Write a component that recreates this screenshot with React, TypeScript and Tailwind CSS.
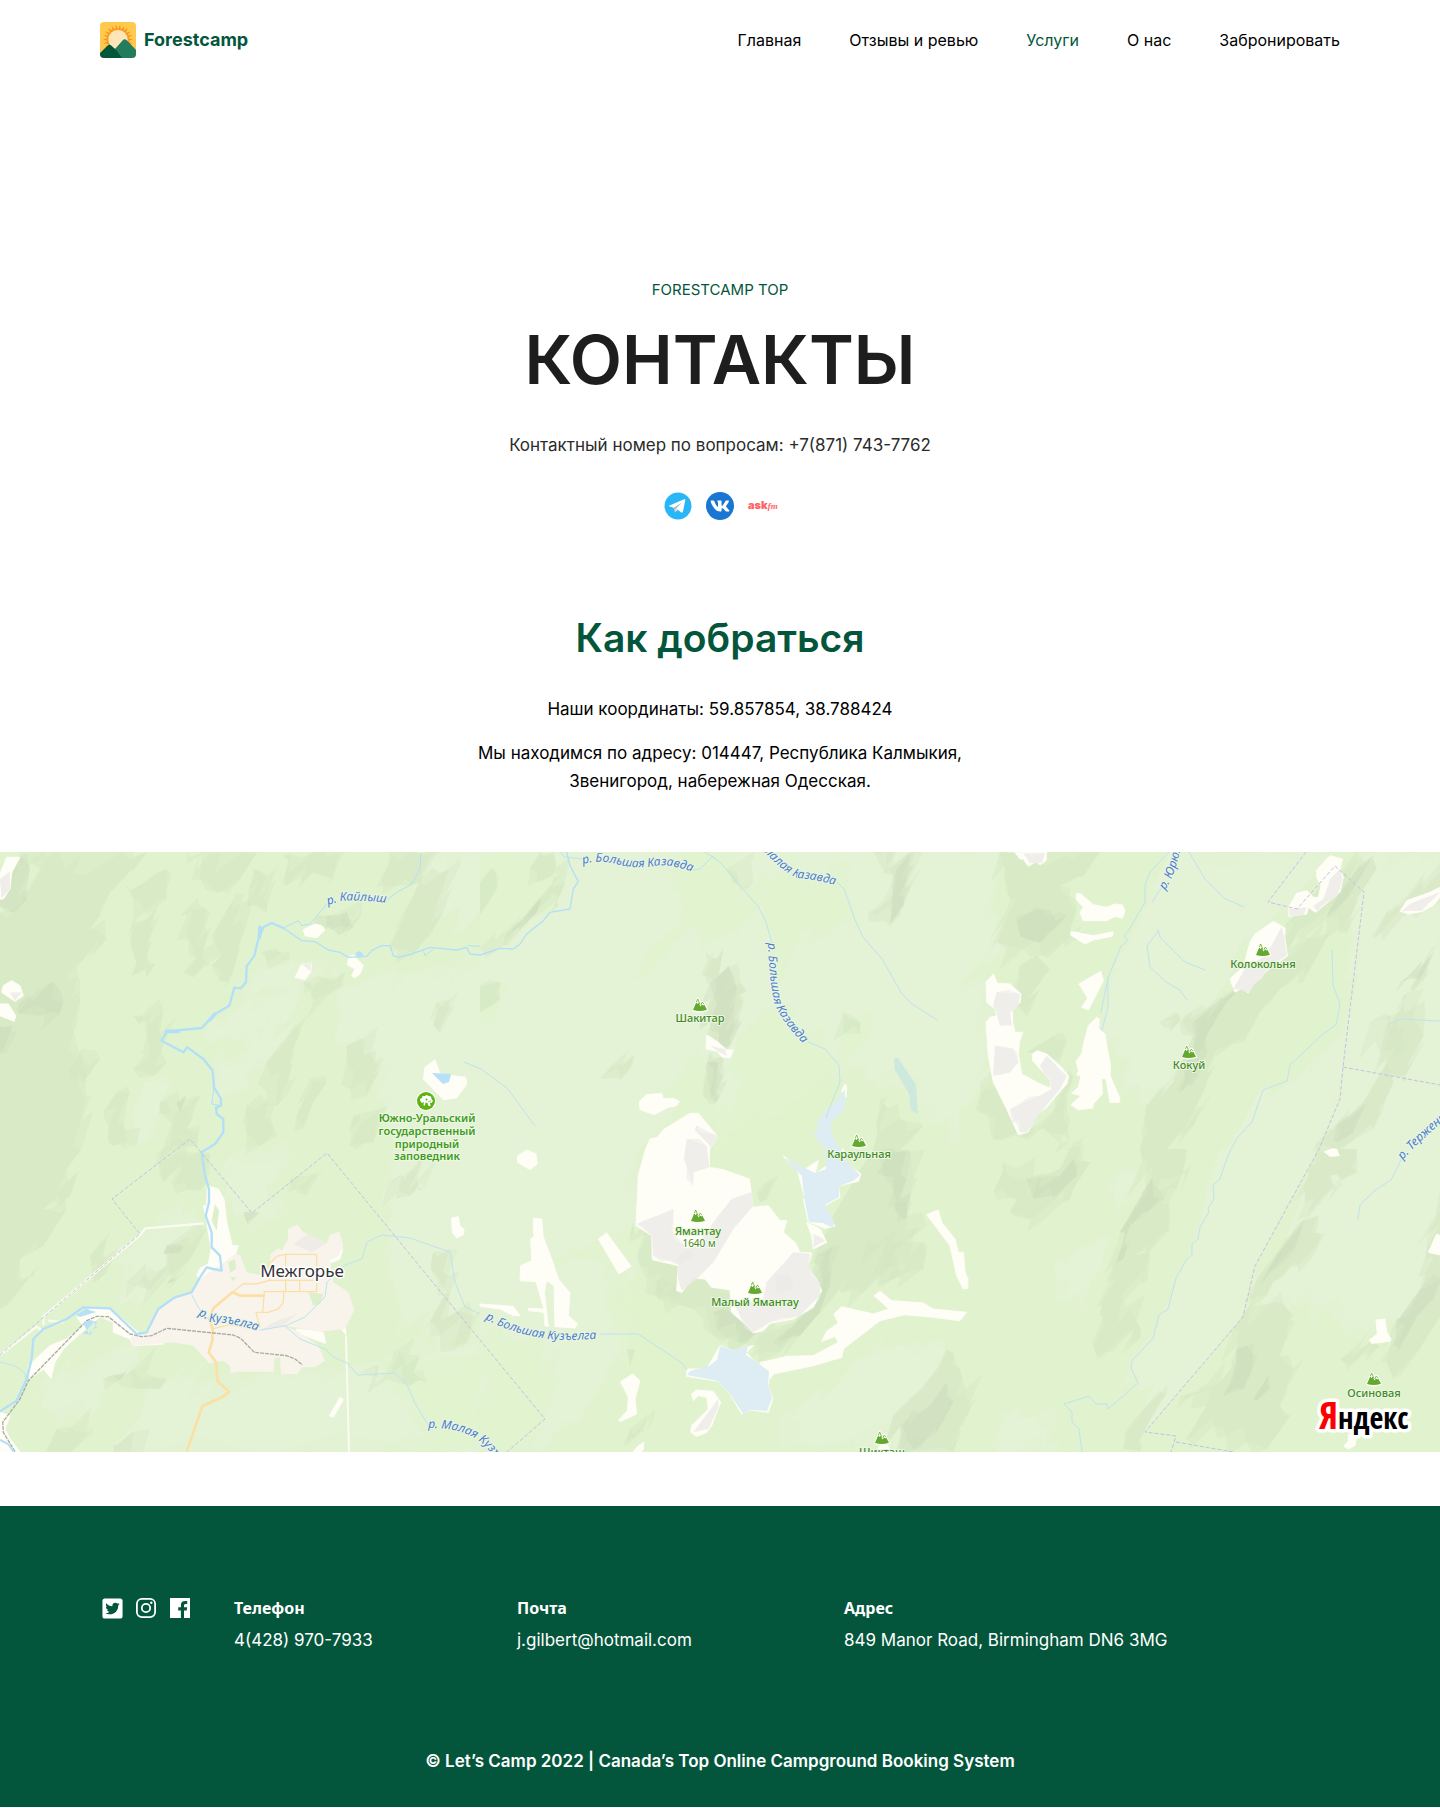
import React from "react";
import { FaTwitterSquare, FaVk } from "react-icons/fa";

const navItems = [
  { label: "Главная" },
  { label: "Отзывы и ревью" },
  { label: "Услуги", active: true },
  { label: "О нас" },
  { label: "Забронировать" },
];

const footerColumns = [
  { title: "Телефон", value: "4(428) 970-7933", href: "tel:44289707933", width: "w-[283px]" },
  { title: "Почта", value: "j.gilbert@hotmail.com", href: "mailto:j.gilbert@hotmail.com", width: "w-[327px]" },
  { title: "Адрес", value: "849 Manor Road, Birmingham DN6 3MG", href: "#address", width: "flex-1" },
];

function LogoMark() {
  const rays = Array.from({ length: 22 }, (_, i) => {
    const a = (i * Math.PI * 2) / 22;
    const p = (r: number, d: number) =>
      `${(18 + r * Math.cos(a + d)).toFixed(2)},${(17.5 + r * Math.sin(a + d)).toFixed(2)}`;
    return `${p(10, -0.14)} ${p(15.2, 0)} ${p(10, 0.14)}`;
  });
  return (
    <svg viewBox="0 0 36 36" className="size-9" aria-hidden="true">
      <defs>
        <clipPath id="logo-clip">
          <rect width="36" height="36" rx="4" />
        </clipPath>
      </defs>
      <g clipPath="url(#logo-clip)">
        <rect width="36" height="36" fill="#ffc94d" />
        {rays.map((r) => (
          <polygon key={r} points={r} fill="#f7941d" />
        ))}
        <circle cx="18" cy="17.5" r="10.8" fill="#f7981d" opacity=".6" />
        <circle cx="18" cy="17.5" r="9.6" fill="#ffe6ba" />
        <path d="M12 36 15 27 22.500 18.500Q24.500 16 27 18.500L36 28V36Z" fill="#237d5d" />
        <path d="M0 31 7.500 23.700Q9.500 22 11.500 23.700L16.500 28.500 22 36H0Z" fill="#02563b" />
      </g>
    </svg>
  );
}

function TelegramIcon() {
  return (
    <svg viewBox="0 0 28 28" className="size-7" aria-hidden="true">
      <circle cx="14" cy="14" r="13.500" fill="#29b6f6" />
      <path d="M4.500 14 20 7.200Q21.400 6.800 21.200 8.400L19 19.600Q18.500 21.300 17 20.300L13.200 17.500 11 19.600 9.500 15.800Z" fill="#fff" />
      <path d="M9.500 15.800 11 20.600 11.800 17 18 10.500Z" fill="#b0bec5" />
      <path d="M11 20.600 11.800 17 13.600 18.300Z" fill="#cfd8dc" />
    </svg>
  );
}

function InstagramIcon() {
  return (
    <svg viewBox="0 0 20 20" className="size-5" fill="none" stroke="#fff" aria-hidden="true">
      <rect x=".9" y=".9" width="18.200" height="18.200" rx="5" strokeWidth="1.800" />
      <circle cx="10" cy="10" r="4.200" strokeWidth="1.800" />
      <circle cx="15.300" cy="4.700" r="1.200" fill="#fff" stroke="none" />
    </svg>
  );
}

function FacebookIcon() {
  return (
    <svg viewBox="0 0 20 20" className="size-5" aria-hidden="true">
      <path d="M0 0H20V20H14V12.400H16.700L17.200 9.300H14V7.500C14 6.500 14.500 5.900 15.700 5.900H17.200V3.200C16.700 3.100 15.900 3 15 3 12.500 3 10.900 4.500 10.900 7.100V9.300H8.200V12.400H10.900V20H0Z" fill="#fff" />
    </svg>
  );
}

/* ---------- Map ---------- */

type Sector = {
  x: number;
  y: number;
  light?: string[];
  green?: string[];
  dark?: string[];
  deep?: string[];
  snow?: string[];
  shade?: string[];
};

/* Every sector uses a grid three times finer than the map itself. */
const sectors: Sector[] = [
  {
    x: 0,
    y: -3,
    light: [
      "740,380 880,330 1030,370 820,420 760,440",
      "640,500 760,440 900,450 860,520 700,580 610,560",
      "1020,400 1300,350 1440,350 1440,900 1180,900 1120,640 1000,580",
      "640,620 760,640 740,720 660,740",
      "430,700 520,690 480,760 470,860 420,890 400,800",
      "750,520 900,500 830,620 740,640",
      "1230,10 1440,10 1440,180 1400,240 1290,200 1240,120",
    ],
    dark: [
      "60,10 440,10 400,60 370,90 330,130 300,200 270,240 320,270 200,380 235,380 240,460 245,900 0,900 0,190 60,170 120,60",
      "560,10 770,10 720,90 650,130 600,90",
      "380,110 500,60 500,150 400,150",
      "540,200 620,180 610,300 625,350 580,385 550,370 590,330 565,270",
      "670,200 710,130 735,240 710,330 690,400 660,395 635,350 665,320 640,260",
      "400,210 440,210 470,180 440,320 465,345 440,385 395,380 410,340 390,280",
      "760,60 800,80 800,190 740,170",
      "1170,10 1290,10 1260,100 1230,110 1150,110",
      "1260,90 1345,60 1330,190 1290,260 1240,310 1170,290",
      "950,200 1085,200 1030,245 940,235",
      "910,400 1035,370 1030,410 940,455",
      "400,500 490,485 480,550 500,640 460,680 400,660 450,620 440,560",
      "800,640 900,520 880,600 860,740 830,770",
      "1040,590 1090,570 1125,640 1100,740 1050,720",
      "480,760 600,740 560,840 590,890 530,890",
      "350,730 390,730 370,820 410,890 340,890 310,790",
      "740,770 800,760 830,860 780,890 740,850",
      "245,600 300,630 250,700 210,690",
      "1310,460 1350,450 1320,550 1300,530",
      "850,20 1020,10 1000,90 940,70 860,110",
      "780,310 840,310 870,330 800,340",
      "930,690 980,700 940,760 910,840 890,800",
      "1060,800 1140,780 1120,880 1050,890",
    ],
    deep: [
      "60,20 90,60 80,150 40,190 0,170 0,120 35,80",
      "60,460 160,400 190,460 180,495 60,495",
      "0,530 35,530 20,610 0,610",
      "980,200 1040,190 1060,235 990,240",
      "530,760 560,740 540,790",
    ],
    snow: [
      "20,25 60,25 35,70 30,120 10,150 0,150 0,75",
      "35,395 10,410 5,430 45,457 70,440 60,410",
      "0,465 25,465 47,500 43,517 0,500",
      "945,225 910,242 915,260 950,267 975,242 965,230",
      "905,345 935,342 932,370 915,392 885,385",
      "1045,325 1060,318 1090,350 1080,375 1063,387 1055,380 1065,360 1043,348",
      "1305,632 1275,655 1270,690 1330,752 1370,747 1400,705 1397,685 1320,675",
    ],
    shade: ["0,90 30,70 30,120 5,148", "30,430 65,430 45,455", "905,345 935,342 930,365"],
  },
  {
    x: 480,
    y: -3,
    light: [
      "0,0 1440,0 1440,880 1300,760 1100,660 900,800 700,860 480,900 0,900",
      "350,400 610,260 640,290 680,400 600,420 560,500 560,580 460,600 400,560 330,560",
      "230,600 350,590 460,640 300,690 180,790",
    ],
    green: [
      "0,10 220,10 250,100 230,180 170,190 60,290 0,300",
      "600,10 710,20 840,170 760,250 640,230 600,150",
      "850,60 1100,110 1130,200 960,250 900,400 850,240",
      "0,400 60,400 40,520 0,500",
      "1100,500 1180,480 1170,560 1120,620 1080,560",
      "780,560 880,480 1070,640 1040,880 740,880",
      "650,600 540,760 600,780 480,900 760,900 700,700",
      "500,300 600,250 560,320 480,390",
    ],
    dark: [
      "730,300 780,400 800,425 775,440 770,530 745,600 720,600 690,560 710,400 675,380 680,310 710,330",
      "690,610 730,620 720,740 705,765 670,740 680,660",
      "80,250 180,150 240,80 170,100 150,60 180,10 220,10 255,100 235,170 150,210 70,290 0,300",
      "0,100 40,60 50,120 0,200",
      "1180,10 1290,10 1280,110 1260,200 1230,230 1165,190 1230,150 1240,80",
      "1090,490 1140,520 1140,555 1090,555",
      "1200,750 1260,810 1330,830 1260,900 1180,900",
      "360,690 460,620 450,660 420,690",
      "0,410 62,400 60,450 0,490",
      "740,60 820,100 800,120 760,100",
    ],
    deep: ["690,400 750,360 770,420 750,590 715,590 690,520", "1250,60 1290,20 1270,170 1230,220", "120,220 180,150 170,190 70,270", "680,640 715,640 710,760 690,730"],
    snow: [
      "680,558 715,580 740,603 760,603 750,627 727,625 712,607 678,600",
      "545,733 500,737 478,757 480,782 522,797 565,775 590,770 598,757 580,748 550,750",
      "505,900 550,842 630,793 655,793 712,862 690,900",
      "1095,705 1100,712 1098,745 1085,725",
    ],
    shade: ["690,590 735,600 740,620 715,607", "650,830 712,862 690,900 620,900"],
  },
  {
    x: 960,
    y: -3,
    light: [
      "0,10 120,10 100,200 140,300 0,400",
      "620,10 1080,10 980,180 850,260 800,400 750,480 700,560 660,700 550,720 540,760 420,540 460,360 540,200",
      "930,120 1040,10 1120,20 1000,140 850,260 760,320 770,260",
      "1210,10 1440,10 1440,900 1080,900 1140,740 1150,650",
      "1140,560 1150,660 1140,750 1075,900 800,900 900,720 1000,690",
      "0,400 80,400 100,700 0,780",
    ],
    dark: [
      "120,10 420,10 370,80 300,110 350,180 330,240 380,250 250,320 190,300 110,280 150,150",
      "180,350 230,320 270,360 200,450 240,420 200,500 160,460",
      "600,520 740,480 850,400 960,310 1110,250 1030,400 960,420 900,490 850,580 770,600 740,700 700,830 620,900 540,900 560,770 640,700 700,560",
      "1110,80 1240,30 1250,60 1190,150 1160,250 1100,210 1020,240 980,310 980,220",
      "60,700 150,700 200,850 320,760 330,880 100,870 60,790",
      "1290,540 1420,290 1400,380 1330,440 1390,560 1340,690 1270,670",
      "1280,190 1440,70 1440,160 1330,200 1240,270",
      "1070,880 1210,760 1280,640 1300,700 1240,840 1130,900",
      "200,610 280,560 320,570 300,640",
      "280,710 340,680 320,760 280,790",
      "1230,520 1290,500 1340,600 1260,610",
    ],
    deep: [
      "700,520 790,450 860,400 800,460 740,560 720,680 660,730 670,660 700,600",
      "170,200 240,180 320,200 240,280 180,260",
      "1130,830 1210,770 1180,850 1130,880",
      "1200,50 1240,20 1160,150 1100,200 1140,130",
      "1320,400 1420,310 1380,390",
    ],
    snow: [
      "165,10 260,10 258,35 240,47 228,38 205,52 190,30 180,30",
      "348,135 360,133 400,167 440,175 465,165 487,168 495,185 487,208 465,202 440,215 370,215 360,190 370,175 350,153",
      "333,247 350,250 400,260 440,252 460,248 457,262 400,273 375,285 332,258",
      "422,367 430,395 385,483 365,475 383,447 357,405",
      "100,375 112,403 150,405 183,435 180,460 157,487 158,520 165,550 188,550 178,580 175,615 185,675 240,705 270,718 272,695 218,635 217,615 232,605 260,615 305,655 326,682 320,705 260,775 232,797 203,850 175,857 140,780 100,700 85,620 78,520 90,505 110,500 105,480 80,460 78,400",
      "410,505 418,510 416,540 435,555 442,600 452,650 450,680 480,748 477,760 450,760 438,690 425,688 427,735 400,765 398,777 355,782 333,767 363,740 335,733 355,715 363,682 350,677 356,665 348,637 365,615 372,580 385,530",
      "1110,20 1147,30 1140,60 1150,85 1140,130 1067,190 1045,175 1040,195 987,202 985,175 1010,133 1040,125 1060,145 1075,145 1083,110 1070,85 1070,63",
      "940,217 975,237 974,265 983,320 915,370 900,390 880,405 865,432 845,418 825,430 810,390 825,375 850,355 870,280 885,255",
      "1440,115 1410,130 1340,155 1320,187 1345,195 1385,188 1420,170 1440,145",
    ],
    shade: [
      "190,12 255,12 245,42 210,42",
      "110,430 180,435 175,475 150,490 155,530 120,530 110,490 100,470",
      "240,650 260,620 320,680 300,720 250,780 200,850 180,850 150,780 240,740 275,720",
      "105,590 160,600 175,640 150,670 100,680",
      "1110,90 1140,60 1147,90 1135,135 1070,185 1060,170 1090,150",
      "935,290 965,235 983,315 915,370 865,430 820,420 860,350 900,330",
      "1350,165 1440,130 1385,185 1325,187",
      "985,180 1040,175 1030,198 990,200",
    ],
  },
  {
    x: 0,
    y: 297,
    light: [
      "700,10 900,10 800,120 860,200 700,200 660,60",
      "640,690 1100,640 1440,580 1440,908 320,908 420,800 460,690",
      "1180,0 1440,0 1440,500 1380,560 1200,480 1170,330",
      "340,300 540,200 600,230 520,330 450,440 380,460",
      "120,700 400,580 470,620 320,700 280,800 140,780",
    ],
    green: ["1140,640 1430,620 1430,890 1300,908 1230,760 1190,690"],
    dark: [
      "0,0 245,0 200,60 210,140 130,180 200,180 130,290 60,330 100,380 0,480",
      "470,10 600,10 620,100 600,125 520,110 540,50 490,100",
      "500,290 620,240 570,330 440,420 380,400 500,350",
      "310,690 400,660 500,690 480,720 420,720 350,700",
      "1210,80 1270,30 1270,120 1230,140 1165,100",
      "1300,310 1350,300 1350,430 1420,500 1410,570 1320,560 1290,520 1340,430 1300,370",
      "1080,670 1170,680 1180,610 1260,620 1240,670 1280,700 1230,710",
      "170,840 280,850 200,908 140,908",
      "340,890 400,850 430,908 340,908",
      "270,320 320,270 320,370 280,400",
      "870,90 950,70 920,140",
    ],
    deep: ["500,290 550,290 540,310 490,315", "730,190 780,190 740,220", "340,680 380,670 360,695", "500,400 560,360 520,400"],
    snow: [
      "622,110 655,120 672,150 680,220 697,290 715,290 705,320 665,370 640,360 600,390 590,380 600,358 625,345 633,300 617,200 610,170 620,170",
      "230,505 280,475 330,478 420,555 490,585 400,590 390,570 340,550 340,520 300,503 240,555 190,600 165,640 153,688 130,660 90,690 85,650 150,590 200,570 250,530",
      "1355,207 1375,203 1380,232 1392,240 1390,257 1370,267 1357,250",
      "1020,745 1030,752 1000,805 988,800",
      "890,540 970,550 977,583 940,570 890,550",
      "990,330 1028,300 1020,330 990,342",
      "0,790 30,800 15,840 30,870 60,908 0,908",
      "1025,540 1035,520 1038,558",
    ],
  },
  {
    x: 480,
    y: 297,
    light: [
      "0,0 480,0 470,220 520,330 400,440 500,560 300,700 200,900 0,900",
      "900,800 1060,720 1120,640 1250,590 1400,600 1390,908 960,880",
      "220,620 400,580 420,660 340,740 300,830 200,780",
    ],
    green: [
      "10,560 190,600 230,700 150,900 10,890",
      "480,560 620,660 500,800 420,820 440,680",
      "380,400 560,450 520,580 400,540",
      "200,340 480,240 520,330 320,330",
    ],
    dark: [
      "460,220 520,260 600,350 700,390 760,430 760,500 830,550 940,520 1030,420 1000,340 1060,200 1130,80 1180,0 1260,0 1300,90 1280,200 1340,230 1240,310 1270,380 1080,430 1010,500 900,610 700,560 640,480 520,440 480,350",
      "1240,800 1320,720 1380,650 1400,600 1440,660 1470,760 1420,908 1250,900",
      "520,400 600,400 600,450 530,440",
      "830,130 875,90 860,150 840,160",
      "450,840 520,820 460,870 430,890",
      "440,600 460,600 450,650",
      "1150,320 1220,280 1200,360 1330,360 1330,280 1160,280",
    ],
    deep: [
      "1210,0 1250,10 1280,90 1280,210 1250,190 1240,120 1210,80",
      "1010,320 1060,290 1050,400 1020,490 960,560 880,580 1020,450",
      "1260,830 1350,770 1400,700 1420,760 1370,850 1300,900",
      "700,490 750,490 830,550 800,580 710,540",
    ],
    snow: [
      "510,-30 497,0 475,80 468,230 515,260 517,332 595,350 590,425 605,430 640,388 675,390 695,415 750,422 755,490 800,530 820,552 850,545 870,523 940,510 1000,475 1025,425 1010,390 983,355 995,312 960,310 945,280 910,250 920,215 900,215 865,170 820,175 808,90 730,62 688,55 688,-10 640,-60",
      "140,3 112,22 113,40 150,62 172,45 168,15",
      "160,208 185,210 190,265 215,330 235,390 270,432 265,500 293,525 285,537 225,533 222,410 200,395 193,430 205,532 195,530 192,490 145,485 145,478 192,480 168,398 120,395 122,350 155,335 152,270 162,262",
      "380,252 453,352 417,375 355,270",
      "0,465 100,472 120,500 100,500 60,480 0,472",
      "458,675 480,695 465,750 470,795 420,818 417,812 442,785 445,745 422,698",
      "635,735 650,723 700,727 722,760 695,830 680,850 650,862 632,850 635,830 685,780 680,745 655,740 640,755",
      "1375,183 1385,220 1425,270 1435,310 1450,310 1455,370 1464,390 1463,418 1450,420 1430,380 1410,290 1340,197",
      "1200,427 1235,455 1330,462 1360,480 1440,488 1460,490 1440,515 1360,505 1275,497 1200,515 1090,600 1085,625 1000,650 880,675 870,690 840,640 860,637 920,622 1000,620 1075,580 1065,562 1025,577 1040,547 1075,522 1062,495 1085,473 1180,495 1227,480 1182,440",
      "720,590 760,605 820,590 800,610 820,635 870,665 865,710 878,750 865,790 810,783 785,795 750,735 715,697 620,682 620,660 680,660",
      "910,20 950,55 975,150 970,150 985,218 1035,238 1065,232 1035,170 1080,145 1075,110 1135,97 1143,75 1100,45 1090,0 1040,50 1005,75 1015,35 960,70 920,35",
      "980,220 1020,240 1040,280 1000,300 995,260",
      "492,880 490,900 485,908 460,908 475,890",
      "1190,908 1200,890 1225,890 1230,908",
    ],
    shade: [
      "620,-30 680,-10 688,55 640,70 640,110 612,30",
      "755,150 815,130 820,170 760,240 700,340 650,390 605,425 595,390 595,320 660,280 700,220",
      "470,225 580,180 580,250 640,320 590,345 520,320 515,260",
      "860,400 940,310 990,315 985,355 1020,400 1020,440 960,500 870,520 820,550 780,500 760,460 850,460",
      "890,380 930,380 940,420 890,430",
      "715,750 715,775 685,840 640,850",
      "1000,255 1035,275 1000,295",
    ],
  },
  {
    x: 960,
    y: 297,
    light: [
      "780,0 1075,0 885,350 850,500 560,850 510,640 600,520 650,400 700,270",
      "1080,0 1440,0 1440,500 1200,540 1050,460 900,470",
      "280,350 430,260 450,330 390,400 430,460 360,430 290,400",
      "460,80 510,60 550,140 460,150",
      "120,800 180,770 220,800 330,908 110,908",
    ],
    dark: [
      "130,40 220,80 300,60 320,0 390,40 340,120 330,150 210,210 150,190 170,150 100,130",
      "540,0 680,0 660,130 600,90 630,200 630,240 520,320 570,310 565,390 490,430 530,520 540,570 410,620 400,590 430,500 460,350 480,250 560,130",
      "870,470 970,465 990,490 960,620 1000,660 960,770 990,800 920,900 860,880 800,860 760,830 680,870 740,770 660,740 780,700 830,640 820,540",
      "1050,50 1110,0 1190,0 1190,70 1110,80 1150,100 1040,200 1035,130",
      "890,390 1020,220 1075,200 1060,320 940,400 920,440 870,450",
      "1440,130 1400,300 1380,430 1340,500 1310,510 1280,640 1300,690 1380,600 1440,500",
      "1140,630 1230,580 1260,590 1160,645",
      "560,770 620,730 560,830 540,908 490,900 500,840",
    ],
    deep: [
      "200,90 300,80 340,30 350,80 280,140 220,150",
      "540,140 575,90 610,150 560,190 510,230 490,330 470,340 480,250",
      "830,600 860,590 880,620 850,720 790,740 820,680",
      "880,750 925,680 930,720 890,755",
      "1380,420 1440,390 1420,450 1370,500 1320,600 1310,520",
      "950,320 1030,220 1000,310 930,370 900,410",
    ],
    snow: [
      "1092,8 1115,0 1130,0 1138,20 1110,22",
      "1248,513 1275,510 1280,548 1293,570 1290,577 1235,583 1228,573 1252,555",
      "1165,855 1190,860 1185,890 1165,900 1152,892 1165,875",
      "1430,255 1440,260 1440,318 1405,310",
    ],
  },
];

const noise = (v: number) => {
  const s = Math.sin(v) * 43758.5453;
  return s - Math.floor(s);
};

/* Splits an outline into slanted rock-like facets; edges shared by two sectors stay straight. */
function facet(points: string, amount: number, seed = 1) {
  const pts = points.trim().split(/\s+/).map((p) => p.split(",").map(Number));
  const out: string[] = [];
  pts.forEach(([x1, y1], i) => {
    const [x2, y2] = pts[(i + 1) % pts.length];
    const len = Math.hypot(x2 - x1, y2 - y1);
    out.push(`${x1},${y1}`);
    if ((x1 === x2 && [0, 1440].includes(x1)) || (y1 === y2 && [0, 900].includes(y1))) return;
    const n = Math.min(8, Math.floor(len / 34));
    for (let k = 1; k <= n; k++) {
      const base = x1 * 1.29 + y1 * 7.82 + k * 5.13 + seed * 3.7;
      const t = (k + (noise(base) - 0.5) * 0.8) / (n + 1);
      const r = noise(base + 1.7) * 2 - 1;
      const w = r * Math.abs(r) * amount * Math.min(1, len / 90);
      out.push(`${(x1 + (x2 - x1) * t + 0.6 * w).toFixed(1)},${(y1 + (y2 - y1) * t - 0.9 * w).toFixed(1)}`);
    }
  });
  return out.join(" ");
}

function Terrain({ kind }: { kind: "ground" | "relief" | "snow" }) {
  return (
    <>
      {sectors.map((s) => (
        <g key={`${s.x}:${s.y}`} transform={`translate(${s.x} ${s.y}) scale(.33333)`}>
          {kind === "ground" && (
            <>
              {s.light?.map((p) => <polygon key={p} points={facet(p, 70)} fill="#e5f2d7" opacity=".5" />)}
              {s.light?.map((p) => <polygon key={p} points={facet(p, 90, 2)} fill="#e5f2d7" opacity=".45" />)}
              {s.green?.map((p) => <polygon key={p} points={facet(p, 70)} fill="#dff3cb" opacity=".45" />)}
              {s.green?.map((p) => <polygon key={p} points={facet(p, 90, 2)} fill="#dff3cb" opacity=".45" />)}
            </>
          )}
          {kind === "relief" && (
            <>
              {s.dark?.map((p) => <polygon key={p} points={facet(p, 60)} fill="#d4e6c3" opacity=".4" />)}
              {s.dark?.map((p) => <polygon key={p} points={facet(p, 85, 2)} fill="#d4e6c3" opacity=".36" />)}
              {s.deep?.map((p) => <polygon key={p} points={facet(p, 40)} fill="#cadbbc" opacity=".38" />)}
              {s.deep?.map((p) => <polygon key={p} points={facet(p, 60, 2)} fill="#cadbbc" opacity=".28" />)}
            </>
          )}
          {kind === "snow" && (
            <>
              {s.snow?.map((p) => <polygon key={p} points={p} fill="#fefdf6" strokeLinejoin="round" stroke="#fefdf6" strokeWidth="3" />)}
              {s.shade?.map((p) => <polygon key={p} points={p} fill="#ebe9e8" opacity=".5" />)}
              {s.shade?.map((p) => <polygon key={p} points={facet(p, 18, 2)} fill="#ebe9e8" opacity=".5" />)}
            </>
          )}
        </g>
      ))}
    </>
  );
}

const peaks = [
  { x: 700, y: 153, name: "Шакитар", dy: 16 },
  { x: 859, y: 289, name: "Караульная", dy: 16 },
  { x: 1263, y: 98, name: "Колокольня", dy: 17 },
  { x: 1189, y: 200, name: "Кокуй", dy: 16 },
  { x: 698, y: 364, name: "Ямантау", dy: 18, height: "1640 м" },
  { x: 755, y: 436, name: "Малый Ямантау", dy: 17 },
  { x: 1374, y: 527, name: "Осиновая", dy: 17 },
  { x: 882, y: 586, name: "Шикташ", dy: 17 },
];

const riverLabels = [
  { id: "kaylysh", d: "M328 53 L341 49 Q362 47 410 54", text: "р. Кайлыш" },
  { id: "kazavda-top", d: "M583 12 Q600 7 620 13 Q638 17 655 14 Q672 10 712 28", text: "р. Большая Казавда" },
  { id: "kazavda-small", d: "M762 -3 Q780 18 797 26 Q817 27 860 40", text: "Малая Казавда" },
  { id: "kazavda-down", d: "M768 91 Q769 125 774 150 Q781 172 820 208", text: "р. Большая Казавда" },
  { id: "yuryuzan", d: "M1165 38 Q1179 18 1185 -30", text: "р. Юрюзань" },
  { id: "terzhenka", d: "M1403 308 Q1420 286 1480 240", text: "р. Терженка" },
  { id: "kuzyelga", d: "M198 463 L212 470 Q240 470 290 491", text: "р. Кузъелга" },
  { id: "kuzyelga-big", d: "M485 467 Q515 483 550 487 Q575 490 625 484", text: "р. Большая Кузъелга" },
  { id: "kuzyelga-small", d: "M428 576 Q462 575 482 591 Q497 605 515 640", text: "р. Малая Кузъелга" },
];

function Peak({ x, y, name, dy, height }: { x: number; y: number; name: string; dy: number; height?: string }) {
  return (
    <g>
      <g transform={`translate(${x} ${y})`}>
        <path d="M-7 5.500 -3.500-5 -2.300-6.500-1 -5 .3-1.500 2-3.500 3.500-3.200 7.500 5Q0 8-7 5.500Z" fill="#fbfdf6" stroke="#fbfdf6" strokeWidth="1.500" />
        <path d="M-7 5 -3.800-2.500 -2.500-1 -1.300-2.300 .5 1.500 2-.4 3.300.6 4.200-.5 7 4.700Q0 7.200-7 5Z" fill="#64a92f" />
        <path d="M-3.600-3 -2.300-6 -.2-1M.8 0 2.200-2.800 4-1.200" fill="none" stroke="#64a92f" strokeWidth=".8" />
      </g>
      <text x={x} y={y + dy + 1} textAnchor="middle" className="text-[11px] font-medium" fill="#438a27" stroke="#edf7e4" strokeWidth="2" strokeLinejoin="round" paintOrder="stroke">
        {name}
      </text>
      {height && (
        <text x={x + 1} y={y + dy + 13} textAnchor="middle" className="text-[10px]" fill="#438a27" stroke="#fdfdf6" strokeWidth="2" paintOrder="stroke">
          {height}
        </text>
      )}
    </g>
  );
}

function AreaMap() {
  return (
    <svg
      viewBox="0 0 1440 600"
      preserveAspectRatio="xMidYMid slice"
      className="block h-[600px] w-full font-['Noto_Sans',sans-serif]"
      role="img"
      aria-label="Карта проезда"
    >
      <rect width="1440" height="600" fill="#e0f3ce" />
      <Terrain kind="ground" />
      <Terrain kind="relief" />
      <Terrain kind="snow" />

      {/* town area */}
      <g transform="translate(0 297) scale(.33333)" strokeLinejoin="round">
        <path d="M600 390 665 345 705 315 720 318 740 370 780 378 808 370 812 315 835 297 845 305 865 270 863 240 893 227 910 250 980 283 990 257 1018 248 1030 290 1015 320 990 335 1000 400 1045 430 1063 483 1035 540 960 548 880 535 850 530 890 545 955 590 975 635 945 655 905 655 893 675 843 675 840 625 823 628 822 668 710 668 692 672 690 650 670 635 628 643 580 590 520 580 435 587 400 590 390 565 440 550 475 480 525 445 575 430Z" fill="#f8f4ec" />
        <path d="M880 285 925 255 980 283 935 310Z M820 520 890 495 850 530 780 545Z" fill="#efebe6" />
        <path d="M685 340 705 330 708 360 690 372Z M925 430 970 435 960 465 940 470Z M645 165 657 185 650 245 635 215Z M690 385 710 385 700 397Z" fill="#ddefcb" />
        <g fill="none" stroke="#fbfbf0" strokeWidth="7">
          <path d="M612 223 437 238 420 258 130 503 130 528M145 515 190 520M0 618 110 533 125 545" />
          <path d="M1038 560 1047 908" strokeWidth="6" />
        </g>
        <g fill="none" stroke="#fbe0a6" strokeWidth="4">
          <path d="M808 395V345L830 322 855 316H950V428H793L788 490H803L835 480 850 460 851 428M857 316V428M899 395V428M697 430 730 404 768 405 808 394H950M788 490H768L780 535M635 540 690 527 760 540" />
          <path d="M795 440H722L697 430 640 478 628 510 638 540 637 575 626 610 648 640 653 697 688 728 665 745 607 772 560 908" strokeWidth="8" />
        </g>
        <path d="M45 908 10 850 8 820 60 750 85 695 260 515 290 502 325 503 390 555 425 563 455 560 500 538 700 558 722 568 763 610 860 620 885 630 908 648" fill="none" stroke="#a9aaa4" strokeWidth="4" strokeDasharray="12 3" />
      </g>

      {/* lakes */}
      <path d="M845 237 840 245 828 257 818 268 817 281 813 283 825 296 826 317 815 321 799 313 784 306 802 324 804 345 809 370 823 371 833 376 834 370 825 353 839 345 839 334 853 329 860 323 847 310 839 295 830 278 833 268 845 257Z" fill="#deecf3" />
      <path d="M720 494 733 498 748 494 746 503 769 519 768 532 772 546 767 559 750 558 743 562 730 542 718 529 687 523 690 519 709 514 717 508Z" fill="#deecf3" />
      <path d="M894 206 898 206 916 233 918 262 911 258 909 242 895 218Z" fill="#cde8dc" />
      <path d="M432 221 451 222 449 230 443 232Z M355 101 360 99 364 103 358 106Z M83 471 90 484 97 470 90 468Z M76 463 86 457 96 460 80 465Z M83 482 94 470 97 475 88 482Z" fill="#b8e0f8" />

      {/* rivers */}
      <g fill="none" strokeLinejoin="round" strokeLinecap="round">
        <g transform="translate(0 -3) scale(.33333)" stroke="#b4dff8">
          <path d="M850 237 905 275 945 278 985 303 1020 310 1045 325 1100 322 1115 305 1145 290 1170 290 1180 320 1195 325 1235 315 1290 295 1370 303 1400 295 1410 315 1440 318 1500 298 1540 300 1560 285 1580 255 1630 215 1650 190 1710 180 1720 120 1735 98 1710 50 1700 10" strokeWidth="4" />
          <path d="M850 237 815 222 790 235 775 270 763 320 740 352 738 400 722 418 703 416 688 470 645 495 605 537 500 547 485 575 550 610 562 595 610 630 638 665 642 715 663 750 663 770 648 775 650 795 670 810 670 850 645 885 605 910 615 980 627 1020 627 1060 617 1100 635 1150 635 1195 660 1220 665 1265 640 1260 620 1255 600 1285 575 1330 525 1345 475 1380 440 1450 410 1455 330 1378 250 1375 200 1410 130 1440 100 1470 95 1530 80 1590 50 1655 0 1687" strokeWidth="7" />
          <path d="M780 235 778 265M535 547H500M645 495 630 512" strokeWidth="11" />
          <path d="M642 715 635 765 663 770M1270 305 1275 320 1300 300M1405 290 1440 292M1262 15 1260 60 1235 105 1190 130 1160 155M985 160 930 225 905 230 895 215 850 237" strokeWidth="3" />
        </g>
        <g stroke="#bfe3ee" strokeWidth="1">
          <path d="M561 0 564 5 584 7M693 18 700 17 712 5 720 10 748 43 758 54 766 70 772 91M704 0 715 6M837 30 844 37 855 68 863 85 882 107 902 142 912 152 937 168M808 190 825 197 839 213 840 230 830 255 826 266M464 210 481 217 507 236 535 274M1189 0 1205 27 1224 46 1244 55M1169 0 1150 20 1145 33 1145 50 1129 78 1124 84 1128 88 1121 94 1108 126 1101 160M1162 35 1152 50M1108 126 1108 155 1102 178M1159 78 1147 94 1150 115 1166 130 1180 138 1187 148M1158 78 1160 85 1185 110 1205 118M1332 98 1333 133 1340 152 1336 173 1323 182 1290 213 1287 229 1263 238 1252 270 1238 285 1231 297 1225 312 1220 327 1213 333 1214 347 1208 356 1209 360 1200 375 1198 387 1192 392 1192 403 1186 408 1176 426 1168 457 1159 463 1153 486 1132 509 1131 516 1138 531 1122 545 1108 557 1107 552 1096 552 1089 544 1064 552 1072 560 1072 570 1079 577 1082 600M1388 173 1400 167 1440 169M1403 303 1398 314 1391 328 1374 339 1360 353 1358 367" />
          <path d="M192 443 198 455 205 465 215 470M260 478 285 474 305 465 325 445 327 430 345 413 362 407 367 390 382 383 410 386 450 400 455 430 465 455 480 462M285 474 300 487 325 497 335 506 347 511 358 523 395 521 407 533 415 551 428 573M600 482 638 482 682 511 687 518M0 510 15 514 24 520 26 527" />
        </g>
        <path d="M0 588 8 592 14 600" stroke="#b4dff8" strokeWidth="2" />
      </g>

      {/* administrative borders */}
      <g fill="none" stroke="#c4c1e4" strokeWidth="1" strokeDasharray="4 2">
        <path d="M0 503 140 382 112 347 190 287 200 299 252 361 327 301 480 488 545 567 507 600" />
        <path d="M1306 0 1268 50 1297 57 1335 14 1364 40 1343 215 1340 247 1319 297 1255 414 1243 465 1145 580 1176 584 1171 600M1343 215 1440 233M1176 590 1233 600" />
      </g>

      {/* nature reserve */}
      <circle cx="426" cy="249" r="10" fill="#fff" />
      <circle cx="426" cy="249" r="9" fill="#5fb313" />
      <path d="M420.500 249.500 420 247 422 246 422.500 244 425 244 426.500 243 429 244 431 244.500 431.500 247 433 249 431.500 251 430 250.500 430.500 254H428.500L427.500 251 425.500 250.500 425 253.500H423.500L423.800 250 422 251Z" fill="#fff" />
      <circle cx="426.500" cy="247.500" r="1" fill="#5fb313" />
      <path d="M428 250 431 248.500" stroke="#5fb313" strokeWidth=".7" />
      <text textAnchor="middle" className="text-[11px] font-semibold" fill="#3f9b22" stroke="#eef8e4" strokeWidth="2" strokeLinejoin="round" paintOrder="stroke">
        <tspan x="427" y="270">Южно-Уральский</tspan>
        <tspan x="427" y="283">государственный</tspan>
        <tspan x="427" y="296">природный</tspan>
        <tspan x="427" y="308">заповедник</tspan>
      </text>

      {peaks.map((p) => (
        <Peak key={p.name} {...p} />
      ))}

      {riverLabels.map((r) => (
        <g key={r.id}>
          <path id={r.id} d={r.d} fill="none" />
          <text className="text-[12px] italic" fill="#4c7ecb" stroke="#eaf6e4" strokeWidth="2" strokeLinejoin="round" paintOrder="stroke">
            <textPath href={`#${r.id}`}>{r.text}</textPath>
          </text>
        </g>
      ))}

      <text x="302" y="425" textAnchor="middle" className="text-[17px]" fill="#33343a" stroke="#fff" strokeWidth="3" strokeLinejoin="round" paintOrder="stroke">
        Межгорье
      </text>

      <text x="1319" y="577" className="font-['Open_Sans_Condensed','Roboto_Condensed','DejaVu_Sans_Condensed','Noto_Sans',sans-serif] text-[30px]" stroke="#fff" strokeWidth="7" strokeLinejoin="round" paintOrder="stroke">
        <tspan fill="#f00" className="text-[38px]">Я</tspan>
        <tspan fill="#000">ндекс</tspan>
      </text>
    </svg>
  );
}

export default function App() {
  return (
    <div className="bg-white font-['Inter',sans-serif] text-black">
      <header className="flex h-20 items-center justify-between px-[100px]">
        <a href="#home" className="flex items-center gap-2">
          <LogoMark />
          <span className="text-lg font-bold text-[#03563b]">Forestcamp</span>
        </a>
        <nav aria-label="Основное меню">
          <ul className="flex gap-12 text-base">
            {navItems.map((item) => (
              <li key={item.label}>
                <a href="#nav" className={item.active ? "text-[#03563b]" : "text-black"}>
                  {item.label}
                </a>
              </li>
            ))}
          </ul>
        </nav>
      </header>

      <main>
        <section className="flex flex-col items-center pt-[198px] text-center">
          <p className="text-[15px] leading-6 text-[#03563b]">FORESTCAMP TOP</p>
          <h1 className="mt-[14px] text-[68px] leading-[86px] font-semibold text-[#1e1e1e]">КОНТАКТЫ</h1>
          <p className="mt-[29px] text-[17px] leading-7 text-[#2b2b2b]">Контактный номер по вопросам: +7(871) 743-7762</p>
          <div className="mt-8 flex items-center gap-[14px]">
            <a href="#telegram" aria-label="Telegram">
              <TelegramIcon />
            </a>
            <a href="#vk" aria-label="ВКонтакте" className="flex size-7 items-center justify-center rounded-full bg-[#1976d2] text-white">
              <FaVk className="size-5" />
            </a>
            <a href="#askfm" className="flex w-7 items-baseline text-[11px] leading-7 font-black text-[#ff6464]">
              ask<span className="font-['Liberation_Serif',serif] text-[9px] font-bold italic">fm</span>
            </a>
          </div>
        </section>

        <section id="address" className="mt-[88px] flex flex-col items-center text-center">
          <h2 className="text-[39px] leading-[60px] font-semibold text-[#03563b]">Как добраться</h2>
          <p className="mt-[27px] text-[17px] leading-7">Наши координаты: 59.857854, 38.788424</p>
          <p className="mt-4 max-w-[500px] text-[17px] leading-7">
            Мы находимся по адресу: 014447, Республика Калмыкия, Звенигород, набережная Одесская.
          </p>
          <div className="mt-[57px] w-full">
            <AreaMap />
          </div>
        </section>
      </main>

      <footer className="mt-[54px] bg-[#03563b] px-[100px] pt-[90px] pb-[34px] text-white">
        <div className="flex items-start">
          <div className="flex w-[134px] gap-[14px] pt-[2px] pl-[2px]">
            <a href="#twitter" aria-label="Twitter" className="flex size-5 items-center justify-center">
              <FaTwitterSquare className="size-[23px] shrink-0" />
            </a>
            <a href="#instagram" aria-label="Instagram">
              <InstagramIcon />
            </a>
            <a href="#facebook" aria-label="Facebook">
              <FacebookIcon />
            </a>
          </div>
          {footerColumns.map((c) => (
            <div key={c.title} className={c.width}>
              <h3 className="font-['Noto_Sans',sans-serif] text-base leading-6 font-bold">{c.title}</h3>
              <a href={c.href} className="mt-2 block text-[17px] leading-6">
                {c.value}
              </a>
            </div>
          ))}
        </div>
        <p className="mt-[97px] text-center text-[17px] leading-6 font-semibold">
          © Let’s Camp 2022 | Canada’s Top Online Campground Booking System
        </p>
      </footer>
    </div>
  );
}
